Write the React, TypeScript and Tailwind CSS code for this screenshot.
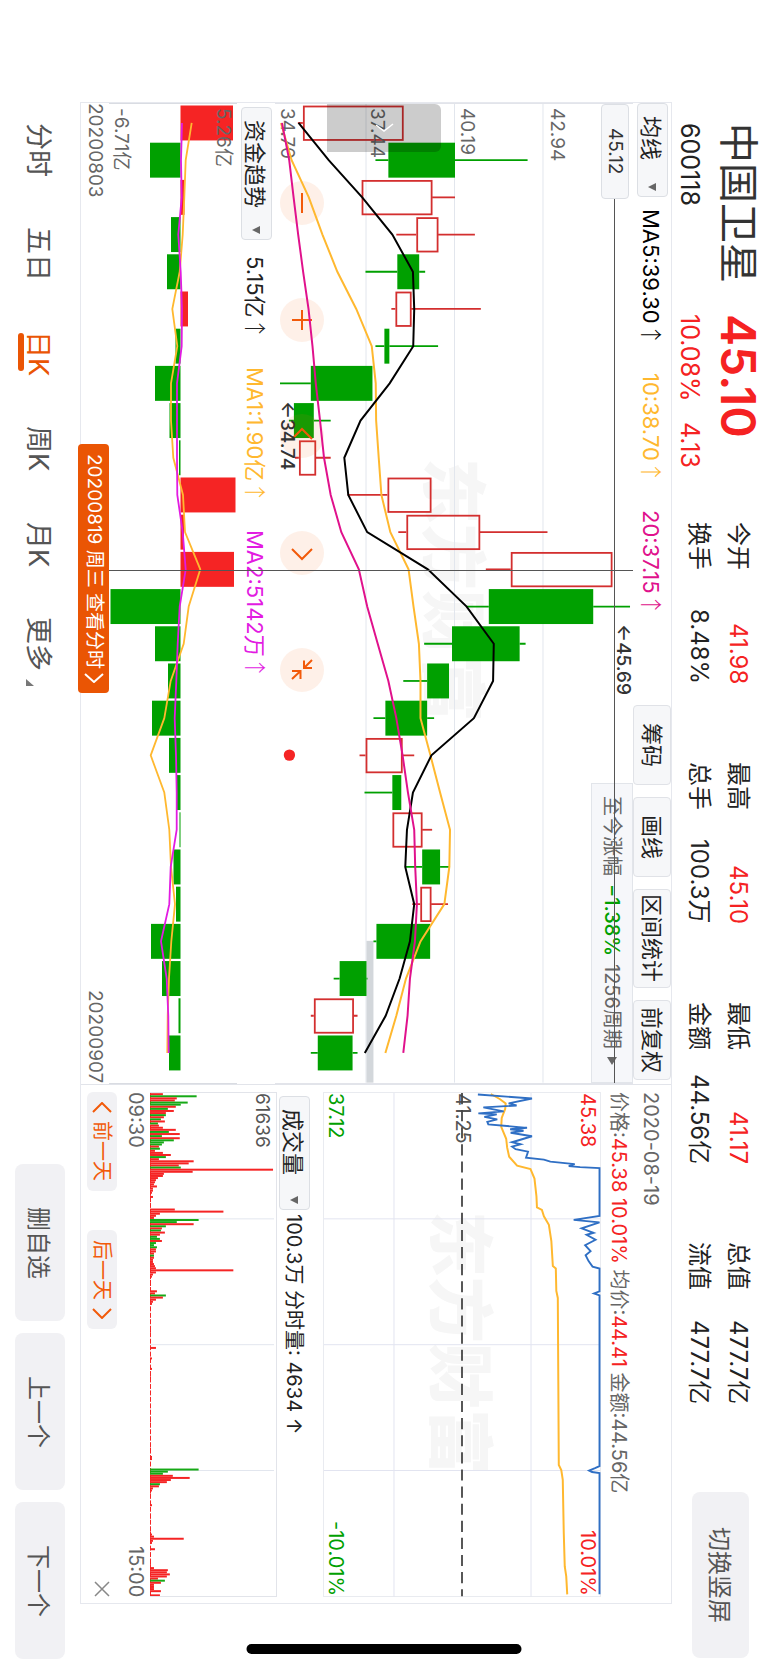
import React from 'react';

type Candle = { up: boolean; body: [number, number]; wick: [number, number] };

const FIRST = 122;
const STEP = 37.25;
const at = (i: number) => FIRST + STEP * i;

const RED = '#f52424';
const GREEN = '#00a000';

const c = (up: number, a: number, b: number, lo: number, hi: number): Candle => ({
  up: up === 1,
  body: [a, b],
  wick: [lo, hi],
});

const candles: Candle[] = [
  c(1, 302, 403, 297, 403),
  c(0, 388, 455, 375, 528),
  c(1, 361, 432, 361, 455),
  c(1, 416, 438, 396, 475),
  c(0, 397, 419, 365, 425),
  c(1, 395, 411, 391, 481),
  c(0, 384, 389, 375, 438),
  c(0, 310, 372, 279, 372),
  c(0, 293, 313, 288, 330),
  c(1, 298, 315, 294, 330),
  c(1, 387, 431, 347, 431),
  c(1, 406, 480, 398, 548),
  c(1, 511, 613, 486, 613),
  c(0, 489, 594, 466, 631),
  c(0, 452, 520, 424, 526),
  c(0, 427, 449, 403, 449),
  c(0, 385, 427, 373, 434),
  c(1, 365, 402, 359, 414),
  c(0, 392, 401, 364, 401),
  c(1, 392, 422, 392, 432),
  c(0, 422, 440, 405, 450),
  c(1, 420, 431, 412, 448),
  c(0, 376, 430, 373, 430),
  c(0, 339, 366, 333, 367),
  c(1, 313, 353, 310, 357),
  c(0, 317, 352, 310, 357),
];

const ma5 = [297.7, 328, 361.7, 392, 412.7, 414, 413, 389.3, 360, 343.7, 347.7, 366.7, 427.7, 466.7, 494, 493.3, 474, 431.3, 412.7, 406.7, 405, 414, 409.7, 399.3, 385.3, 364.3];
const ma10 = [280, 290.7, 308, 321.7, 336.7, 355.7, 371.3, 375.3, 375.7, 378.3, 381, 390, 408.3, 413.3, 418.7, 420.3, 420.3, 430.3, 440, 450, 449.3, 444.3, 420.3, 405.7, 396, 385];
const ma20 = [281, 288.3, 292.7, 297.3, 302.3, 307.7, 311.7, 315, 319.3, 323.3, 330, 340.7, 358.3, 366.7, 377.3, 388, 396, 402.3, 407.7, 414, 415, 416.7, 414.7, 409.7, 407.3, 403];

const flow = [233, 150, 184.5, 171, 167, 188, 175.5, 155, 169.5, 179, 235.5, 184, 234, 110.5, 155, 168, 152, 169, 177, 179.5, 173.5, 176, 151, 162, 178.5, 169];
const flowMa1 = [191.7, 185.7, 184.3, 182.7, 179.7, 172.3, 177.3, 171, 171, 173.3, 183, 185, 200.3, 188.7, 183.7, 170.7, 164.3, 150.7, 164.3, 169.3, 171, 175, 171.3, 169, 167.7, 167.3];
const flowMa2 = [182, 181, 181.7, 178.3, 180.7, 182, 181.7, 177, 177, 177, 177.3, 182.7, 185.7, 179.7, 177.7, 176.3, 174.7, 176, 176.7, 176.7, 170.7, 169.3, 161, 166.7, 168.3, 168.7];

const line = (xs: number[]) => xs.map((x, i) => `${x},${at(i)}`).join(' ');

const price: [number, number][] = [
  [477, 1092.5], [531.5, 1096.5], [508, 1101.5], [516, 1103.5], [482.5, 1105.5], [503, 1109.5], [477.5, 1111.5], [496, 1112.5], [483.5, 1115], [496.5, 1117.5], [486.5, 1120], [487.5, 1122.5],
  [526.5, 1126], [509.5, 1127.5], [523, 1129], [510, 1131], [531.5, 1134.5], [511.5, 1140.5], [520, 1142.5], [511.5, 1145], [515, 1147.5], [527.5, 1150], [525.5, 1156], [543.5, 1158], [550, 1160], [574.5, 1162.5],
  [568.5, 1164.5], [580, 1165.5], [599.5, 1166.5], [599.5, 1214.5], [573.5, 1218.5], [599.5, 1221], [581.5, 1227], [593.5, 1231.5], [586.5, 1233.5], [595.5, 1238.5], [585, 1244], [590.5, 1250], [585.5, 1254],
  [588.5, 1260], [592.5, 1265.5], [599.5, 1267.5], [599.5, 1290.5], [594, 1292.5], [599.5, 1294.5], [599.5, 1466], [595, 1468], [589, 1470.5], [592, 1472], [599.5, 1473], [599.5, 1595],
];
const average: [number, number][] = [
  [490, 1092], [499, 1097], [505, 1101.5], [504.5, 1107], [501, 1116], [500.5, 1125], [505.5, 1137], [506.5, 1146], [508.5, 1155], [516.5, 1164], [530, 1167.5], [534, 1177], [536, 1195], [536.5, 1206], [541.5, 1208.5],
  [543.5, 1215], [548.5, 1223.5], [551, 1240], [552.5, 1265], [555.5, 1267.5], [556, 1290], [557.5, 1297], [558, 1380], [558.5, 1465], [561, 1470], [562.5, 1480], [563.5, 1533], [564.5, 1567], [566, 1577], [567, 1595],
];

// Minute volume: slot index, bar length, 1 for rising.
const volume: [number, number, number][] = [
  [0, 13, 1], [1, 47, 0], [2, 27, 1], [3, 25, 1], [4, 38, 0], [5, 31, 0], [6, 26, 1], [7, 18, 0], [8, 24, 1], [9, 16, 1], [10, 16, 0], [11, 14, 1], [12, 11, 0], [13, 15, 1], [14, 8, 0], [15, 9, 1],
  [16, 13, 1], [17, 26, 1], [18, 19, 0], [19, 30, 1], [20, 12, 0], [21, 30, 1], [22, 24, 0], [23, 14, 0], [24, 12, 0], [25, 9, 1], [26, 10, 0], [27, 5, 1], [28, 13, 1], [29, 21, 1], [30, 16, 0], [31, 9, 1],
  [32, 44, 1], [33, 39, 1], [34, 29, 1], [35, 31, 0], [36, 124, 1], [37, 43, 1], [38, 14, 1], [39, 13, 1], [40, 8, 1], [41, 6, 1], [42, 5, 1], [43, 4, 1], [44, 7, 1], [45, 3, 1], [46, 3, 1], [47, 2, 1], [48, 1, 1], [49, 3, 1], [51, 1, 1], [53, 1, 1],
  [55, 25, 1], [56, 74, 1], [57, 10, 1], [58, 6, 1], [59, 4, 1], [60, 49, 0], [61, 27, 0], [62, 44, 1], [63, 16, 0], [64, 12, 1], [65, 11, 0], [66, 15, 1], [67, 10, 1], [68, 7, 0], [69, 10, 0], [70, 12, 1], [71, 6, 0], [72, 4, 0], [73, 7, 0],
  [74, 6, 1], [75, 6, 1], [76, 4, 1], [77, 4, 0], [78, 4, 1], [79, 3, 1], [80, 3, 1], [81, 4, 1], [82, 5, 1], [83, 6, 1], [84, 84, 1], [85, 6, 1], [86, 3, 1], [87, 2, 1], [89, 1, 1], [91, 1, 1], [94, 7, 1], [95, 5, 1], [96, 16, 0], [97, 13, 1], [98, 6, 1], [99, 3, 1], [100, 2, 1],
  [102, 1, 1], [108, 1, 1], [113, 1, 1], [121, 6, 1], [126, 2, 1], [131, 2, 1], [135, 1, 1], [142, 1, 1], [151, 1, 1], [156, 1, 1], [161, 1, 1], [169, 1, 1], [173, 2, 1], [174, 2, 1],
  [179, 49, 0], [180, 18, 0], [181, 13, 0], [182, 23, 1], [183, 40, 1], [184, 21, 1], [185, 17, 1], [186, 10, 0], [187, 9, 1], [188, 3, 1], [189, 2, 1], [190, 1, 1], [196, 2, 1], [202, 1, 1],
  [209, 1, 1], [210, 2, 1], [211, 4, 1], [212, 34, 1], [213, 3, 1], [214, 2, 1], [217, 5, 1], [220, 1, 1], [224, 1, 1], [226, 4, 1], [227, 18, 1], [228, 17, 1], [229, 20, 1], [230, 17, 1], [231, 8, 1], [232, 15, 0], [233, 11, 1], [234, 4, 1], [235, 4, 1], [236, 4, 1], [237, 11, 1], [239, 10, 1],
];

const stats = [
  ['今开', '41.98', '换手', '8.48%'],
  ['最高', '45.10', '总手', '100.3万'],
  ['最低', '41.17', '金额', '44.56亿'],
  ['总值', '477.7亿', '流值', '477.7亿'],
];

function Header() {
  return (
    <header className="flex w-24 shrink-0 pt-[123px] pb-3">
      <div className="flex h-[191px] flex-col gap-2 pr-1.5">
        <h1 className="text-[40px] leading-[48px] text-[#333]">中国卫星</h1>
        <span className="text-[25px] leading-8">600118</span>
      </div>
      <div className="flex h-[208px] flex-col gap-2 pr-1.5 text-[#f52222]">
        <strong className="text-[48px] leading-[48px] font-semibold">45.10</strong>
        <div className="flex gap-5 text-[25px] leading-8">
          <span>10.08%</span>
          <span>4.13</span>
        </div>
      </div>
      <div className="flex gap-[78px] pr-2.5">
        {stats.map(([a, av, b, bv], i) => (
          <dl key={a} className="flex h-[162px] flex-col text-2xl leading-[39px]">
            <div className="flex w-[39px] justify-between">
              <dt>{a}</dt>
              <dd className={i < 3 ? 'text-[#f52222]' : ''}>{av}</dd>
            </div>
            <div className="flex w-[39px] justify-between">
              <dt>{b}</dt>
              <dd>{bv}</dd>
            </div>
          </dl>
        ))}
      </div>
      <button className="mt-auto mr-[19px] h-[166px] w-[57px] rounded-lg bg-[#f1f1f4] pr-1 text-2xl text-[#555]">切换竖屏</button>
    </header>
  );
}

function Picker({ label, value, size }: { label: string; value: string; size: string }) {
  return (
    <div className={`relative ${size} w-[31px] shrink-0`}>
      <select
        aria-label={label}
        className="h-full w-full appearance-none rounded border border-[#dcdfe4] bg-[#f6f7f9] pt-3 pr-1 text-[22px] leading-6 text-[#222]"
      >
        <option>{value}</option>
      </select>
      <svg aria-hidden="true" viewBox="0 0 8 8" className="pointer-events-none absolute bottom-1.5 left-[11px] size-2">
        <path d="M8 0V8L0 4Z" fill="#666" />
      </svg>
    </div>
  );
}

function Rise() {
  return <span className="font-['Noto_Sans_CJK_SC',sans-serif] font-light">↑</span>;
}

const toolButtons = [
  ['筹码', 'h-20'],
  ['画线', 'h-20'],
  ['区间统计', 'h-[99px]'],
  ['前复权', 'h-20'],
];

function MainToolbar() {
  return (
    <div className="flex w-[38px] shrink-0 items-center text-[22px] leading-8">
      <Picker label="主图指标" value="均线" size="h-[94px]" />
      <span className="mt-3 text-black">MA5:39.30<Rise /></span>
      <span className="mt-[27px] text-[#ffb82f]">10:38.70<Rise /></span>
      <span className="mt-[27px] text-[#e0118c]">20:37.15<Rise /></span>
      <div className="mt-auto mb-1 flex gap-3">
        {toolButtons.map(([t, size]) => (
          <button key={t} className={`${size} w-[38px] rounded border border-[#e0e2e7] bg-[#f6f7f9] text-[22px] text-[#222]`}>
            {t}
          </button>
        ))}
      </div>
    </div>
  );
}

const zoomButtons = [
  { label: '缩小', place: 'top-[77px]', d: 'M22 12V32' },
  { label: '放大', place: 'top-[194px]', d: 'M22 12V32M12 22H32' },
  { label: '左移', place: 'top-[310px]', d: 'M12 25L22 15L32 25' },
  { label: '右移', place: 'top-[427px]', d: 'M12 18L22 28L32 18' },
  { label: '收起', place: 'top-[544px]', d: 'M32 12L24 20M24 12.500V20H32M12 31L20.500 23M12 23H20.500V31' },
];

const gridLabels = [
  ['34.70', 'left-0'],
  ['37.44', 'left-[90px]'],
  ['40.19', 'left-[180px]'],
  ['42.94', 'left-[270px]'],
];

function CandleChart() {
  return (
    <div className="relative min-w-0 grow border-x border-[#e2e4ea]">
      <span aria-hidden="true" className="absolute top-[354px] left-[138px] text-[66px] leading-[80px] font-black text-[#f6f6f6]">东方财富</span>
      <svg aria-label="日K线图" viewBox="274 103 360 980" preserveAspectRatio="none" className="absolute inset-0 size-full">
        <path d="M365.500 103V1083M454.500 103V1083M543.500 103V1083" stroke="#e2e6ed" />
        <rect x="366" y="941" width="7" height="142" fill="#d3d7db" />
        {candles.map((k, i) => {
          const y = at(i);
          const color = k.up ? '#d32f2f' : GREEN;
          const [a, b] = k.body;
          return (
            <g key={i} stroke={color} strokeWidth="1.8">
              <path d={`M${k.wick[0]} ${y}H${a}M${b} ${y}H${k.wick[1]}`} />
              {k.up ? (
                <rect x={a + 1} y={y - 16.5} width={b - a - 1.5} height="33.500" fill="none" />
              ) : (
                <rect x={a} y={y - 17.5} width={b - a} height="35" fill={color} stroke="none" />
              )}
            </g>
          );
        })}
      </svg>

      {gridLabels.map(([t, place]) => (
        <span key={t} className={`absolute top-1 ${place} text-[19px] leading-6 text-[#666]`}>{t}</span>
      ))}
      <div className="absolute top-0 left-[52px] h-12 w-[114px] rounded-r-md bg-black/20">
        <svg aria-hidden="true" viewBox="0 0 24 12" className="absolute top-4 left-[46px] h-3 w-6">
          <path d="M3 5L11 11L20 4" fill="none" stroke="#fff" strokeWidth="1.500" />
        </svg>
      </div>
      {zoomButtons.map((b) => (
        <button key={b.label} aria-label={b.label} className={`absolute ${b.place} left-[5px] size-11 rounded-full bg-[#f26a1b]/10`}>
          <svg aria-hidden="true" viewBox="0 0 44 44" className="size-11">
            <path d={b.d} fill="none" stroke="#f25a0a" strokeWidth="2" />
          </svg>
        </button>
      ))}
      <svg aria-hidden="true" viewBox="274 103 360 980" preserveAspectRatio="none" className="pointer-events-none absolute inset-0 size-full">
        <g fill="none" strokeWidth="2">
          <polyline points={line(ma10)} stroke="#ffb82f" />
          <polyline points={line(ma5)} stroke="#000" />
          <polyline points={line(ma20)} stroke="#e0118c" />
        </g>
        <circle cx="288.500" cy="755" r="5.700" fill={RED} />
      </svg>
      <span className="absolute top-[297px] left-0 text-[19px] leading-6 font-medium text-[#333]">←34.74</span>
      <span className="absolute top-[520px] left-[336px] text-[19px] leading-6 font-medium text-[#333]">←45.69</span>
      <div className="absolute right-0 bottom-0 flex h-[300px] w-[42px] items-center gap-2 border border-[#e2e5ea] bg-[#f6f7fa] pt-3 text-xl leading-6 text-[#666]">
        <span>至今涨幅</span>
        <span className="font-medium text-[#00a000]">−1.38%</span>
        <span>1256周期</span>
        <svg aria-hidden="true" viewBox="0 0 10 8" className="h-2 w-2.5">
          <path d="M0 0H10L5 8Z" fill="#666" />
        </svg>
      </div>
      <div className="absolute top-[95px] bottom-0 left-[339px] w-px bg-[#555]" />
      <div className="absolute top-[466px] right-0 -left-[166px] h-px bg-[#555]" />
      <div className="absolute top-0 left-[326px] flex h-[95px] w-7 items-center justify-center rounded border border-[#dcdfe4] bg-[#f6f7f9] text-[19px] text-[#333]">
        45.12
      </div>
    </div>
  );
}

function FlowToolbar() {
  return (
    <div className="flex w-[38px] shrink-0 items-center pt-1 text-[22px] leading-8">
      <Picker label="副图指标" value="资金趋势" size="h-[133px]" />
      <span className="mt-4 text-[#222]">5.15亿<Rise /></span>
      <span className="mt-[27px] text-[#ffb82f]">MA1:1.90亿<Rise /></span>
      <span className="mt-[27px] text-[#e21be2]">MA2:5142万<Rise /></span>
    </div>
  );
}

function FlowChart() {
  const base = 180.5;
  return (
    <div className="relative -z-10 w-[128px] shrink-0 border-x border-[#d9dce2]">
      <svg aria-label="资金趋势图" viewBox="109 103 128 980" preserveAspectRatio="none" className="absolute inset-0 size-full">
        {flow.map((x, i) => (
          <rect
            key={i}
            x={Math.min(x, base)}
            y={at(i) - 17.5}
            width={Math.abs(x - base)}
            height="35"
            fill={x > base ? RED : GREEN}
          />
        ))}
        <g fill="none" strokeWidth="1.800">
          <polyline points={line(flowMa1)} stroke="#ffb82f" />
          <polyline points={line(flowMa2)} stroke="#e21be2" />
        </g>
      </svg>
      <span className="absolute top-1 left-[102px] text-[19px] leading-6 text-[#666]">5.26亿</span>
      <span className="absolute top-1 left-0 text-[19px] leading-6 text-[#666]">-6.71亿</span>
    </div>
  );
}

function DateAxis() {
  return (
    <div className="relative flex w-7 shrink-0 items-center justify-between text-[19px] leading-6 text-[#666]">
      <span>20200803</span>
      <span>20200907</span>
      <button className="absolute top-[341px] right-0 flex h-[249px] w-[31px] items-center justify-center gap-1 rounded-sm bg-[#ea5504] text-[19px] text-white">
        20200819 周三 查看分时
        <svg aria-hidden="true" viewBox="0 0 20 10" className="h-2.5 w-5">
          <path d="M1 1L10 9L19 1" fill="none" stroke="#fff" strokeWidth="2" />
        </svg>
      </button>
    </div>
  );
}

const frame = 'absolute text-[20px] leading-6';

function IntradayPanel() {
  return (
    <section className="flex min-h-0 grow-[511] basis-0 flex-col border-t border-[#e2e4ea] pt-[7px]">
      <div className="flex w-[70px] shrink-0 flex-col gap-1 pr-1.5 text-[20px] leading-7 text-[#666]">
        <span>2020-08-19</span>
        <p className="whitespace-nowrap">
          价格:<b className="font-normal text-[#f52222]">45.38</b> <b className="font-normal text-[#f52222]">10.01%</b> 均价:
          <b className="font-normal text-[#f52222]">44.41</b> 金额:44.56亿
        </p>
      </div>
      <div className="relative mb-1.5 min-w-0 grow border border-[#e9ebf0]">
        <span aria-hidden="true" className="absolute top-[118px] left-[96px] text-[66px] leading-[80px] font-black text-[#f6f6f6]">东方财富</span>
        <svg aria-label="分时图" viewBox="322 1091 278 506" preserveAspectRatio="none" className="absolute inset-0 size-full overflow-visible">
          <path d="M392.500 1091V1597M530.500 1091V1597M322 1217.500H600M322 1344H600M322 1470.500H600" stroke="#e2e4f0" fill="none" />
        </svg>
        <span className={`${frame} top-0 right-0 text-[#f52222]`}>45.38</span>
        <span className={`${frame} top-0 left-[127px] text-[#555]`}>41.25</span>
        <span className={`${frame} top-0 left-0 text-[#00a000]`}>37.12</span>
        <span className={`${frame} right-0 bottom-0 text-[#f52222]`}>10.01%</span>
        <span className={`${frame} bottom-0 left-0 text-[#00a000]`}>-10.01%</span>
        <svg aria-hidden="true" viewBox="322 1091 278 506" preserveAspectRatio="none" className="absolute inset-0 size-full overflow-visible">
          <g fill="none">
            <path d="M461 1091V1597" stroke="#444" strokeWidth="1.800" strokeDasharray="11.200 6" />
            <polyline points={average.map((p) => p.join()).join(' ')} stroke="#ffb82f" strokeWidth="2" />
            <polyline points={price.map((p) => p.join()).join(' ')} stroke="#2f6fc4" strokeWidth="1.900" />
          </g>
        </svg>
      </div>
      <div className="mb-1.5 flex w-[46px] shrink-0 items-center gap-1 pt-1 pr-3 text-[20px] leading-7 text-[#222]">
        <Picker label="分时副图" value="成交量" size="h-[114px]" />
        <span>100.3万 分时量: 4634 ↑</span>
      </div>
      <div className="relative mb-1.5 w-[127px] shrink-0 border-t border-r border-b border-[#e2e4ea]">
        <svg aria-label="成交量图" viewBox="149 1091 127 506" preserveAspectRatio="none" className="absolute inset-0 size-full">
          <path d="M149 1217.500H274M149 1344H274M149 1470.500H274" stroke="#e2e6ee" />
          <path d="M149.500 1091V1597" stroke={RED} strokeDasharray="5 1.500" />
          {volume.map(([k, len, up]) => (
            <rect key={k} x="149" y={1091.2 + k * 2.108} width={len} height="2" fill={up ? RED : '#16a916'} />
          ))}
        </svg>
        <span className="absolute top-0 right-0.5 text-[19px] leading-6 text-[#555]">61636</span>
      </div>
      <div className="mb-1.5 flex w-7 shrink-0 items-center justify-between text-[20px] leading-6 text-[#666]">
        <span>09:30</span>
        <span>15:00</span>
      </div>
      <div className="mb-1.5 flex w-[41px] shrink-0 items-center gap-[39px] text-[20px] text-[#f25a0a]">
        <button className="flex h-[99px] w-[30px] items-center justify-center gap-2 rounded-md bg-[#f1f1f4]">
          <svg aria-hidden="true" viewBox="0 0 20 11" className="h-[11px] w-5">
            <path d="M1 10L10 1L19 10" fill="none" stroke="#f25a0a" strokeWidth="2" />
          </svg>
          前一天
        </button>
        <button className="flex h-[99px] w-[30px] items-center justify-center gap-2 rounded-md bg-[#f1f1f4]">
          后一天
          <svg aria-hidden="true" viewBox="0 0 20 11" className="h-[11px] w-5">
            <path d="M1 1L10 10L19 1" fill="none" stroke="#f25a0a" strokeWidth="2" />
          </svg>
        </button>
        <button aria-label="关闭" className="mt-auto size-4">
          <svg aria-hidden="true" viewBox="0 0 16 16" className="size-4">
            <path d="M1 1L15 15M15 1L1 15" stroke="#888" strokeWidth="1.500" />
          </svg>
        </button>
      </div>
    </section>
  );
}

const tabs = ['分时', '五日', '日K', '周K', '月K', '更多'];

function Footer() {
  return (
    <footer className="flex w-20 shrink-0 items-center justify-between pt-[123px] pb-[11px] text-[27px] text-[#555]">
      <nav className="flex h-[563px] w-11 justify-between pr-1 leading-[40px]">
        {tabs.map((t) => (
          <a key={t} href="#" className={t === '日K' ? 'relative text-[#ea5504]' : 'flex gap-2'}>
            {t}
            {t === '日K' && <span className="absolute top-0.5 left-0 h-[38px] w-1.5 rounded-full bg-[#ea5504]" />}
            {t === '更多' && (
              <svg aria-hidden="true" viewBox="0 0 8 7" className="mr-auto ml-2 h-[7px] w-2 self-end">
                <path d="M0 0V7H8Z" fill="#777" />
              </svg>
            )}
          </a>
        ))}
      </nav>
      <div className="flex gap-3 text-2xl">
        {['删自选', '上一个', '下一个'].map((t) => (
          <button key={t} className="h-[157px] w-[50px] rounded-lg bg-[#f1f1f4] pr-1">
            {t}
          </button>
        ))}
      </div>
    </footer>
  );
}

export default function App() {
  return (
    <div className="relative isolate flex h-screen w-full flex-col overflow-hidden bg-white font-['Inter','Noto_Sans_CJK_SC',sans-serif] text-[#222] [text-orientation:sideways] [writing-mode:vertical-rl]">
      <Header />
      <main className="mt-[102px] mb-[66px] flex min-w-0 grow border border-[#e6e8ee]">
        <section className="flex min-h-0 grow-[980] basis-0 flex-col">
          <MainToolbar />
          <CandleChart />
          <FlowToolbar />
          <FlowChart />
          <DateAxis />
        </section>
        <IntradayPanel />
      </main>
      <Footer />
      <div className="absolute bottom-4 left-1/2 h-2.5 w-[275px] -translate-x-1/2 rounded-full bg-black" />
    </div>
  );
}
